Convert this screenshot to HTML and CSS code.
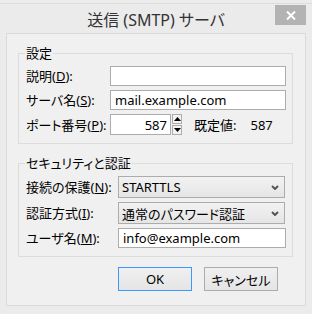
FILE: index.html
```html
<!DOCTYPE html>
<html lang="ja">
<head>
    <meta charset="UTF-8">
    <title>送信 (SMTP) サーバ</title>
    <link rel="stylesheet" href="styles.css">
</head>
<body>
<div class="window">
    <div class="titlebar">
        <div class="title">送信 (SMTP) サーバ</div>
        <a class="closebtn" href="javascript:void(0)">
            <svg width="10" height="9" viewBox="0 0 10 9"><path d="M1 0.5 L9 8.5 M9 0.5 L1 8.5" stroke="#fff" stroke-width="2" fill="none"/></svg>
        </a>
    </div>
    <div class="client">
        <fieldset class="group">
            <legend>設定</legend>
            <div class="rows rows1">
                <label class="lbl">説明(<u>D</u>):</label>
                <input class="text" type="text" value="">
                <label class="lbl">サーバ名(<u>S</u>):</label>
                <input class="text" type="text" value="mail.example.com">
                <label class="lbl">ポート番号(<u>P</u>):</label>
                <div class="portrow">
                    <input class="text port" type="text" value="587">
                    <div class="spin">
                        <span class="spinbtn"><svg width="7" height="4" viewBox="0 0 7 4"><path d="M0 4 L3.5 0 L7 4 Z" fill="#000"/></svg></span>
                        <span class="spinbtn"><svg width="7" height="4" viewBox="0 0 7 4"><path d="M0 0 L3.5 4 L7 0 Z" fill="#000"/></svg></span>
                    </div>
                    <span class="deflbl">既定値:</span>
                    <span class="defval">587</span>
                </div>
            </div>
        </fieldset>
        <fieldset class="group group2">
            <legend>セキュリティと認証</legend>
            <div class="rows rows2">
                <label class="lbl">接続の保護(<u>N</u>):</label>
                <div class="select">
                    <span>STARTTLS</span>
                    <svg width="8" height="5" viewBox="0 0 8 5"><path d="M1 1 L4 4 L7 1" stroke="#555" stroke-width="2" fill="none"/></svg>
                </div>
                <label class="lbl">認証方式(<u>I</u>):</label>
                <div class="select">
                    <span>通常のパスワード認証</span>
                    <svg width="8" height="5" viewBox="0 0 8 5"><path d="M1 1 L4 4 L7 1" stroke="#555" stroke-width="2" fill="none"/></svg>
                </div>
                <label class="lbl">ユーザ名(<u>M</u>):</label>
                <input class="text" type="text" value="info@example.com">
            </div>
        </fieldset>
        <div class="buttons">
            <a class="btn default" href="javascript:void(0)">OK</a>
            <a class="btn" href="javascript:void(0)">キャンセル</a>
        </div>
    </div>
</div>
</body>
</html>
```

FILE: styles.css
```css
body{
    margin:0;
    background-color:#ececec;
    font-family:"Noto Sans","Noto Sans CJK JP",sans-serif;
    font-size:13px;
    font-feature-settings:"palt";
    color:#000;
}
.window{
    width:312px;
    height:311px;
    margin-top:3px;
    border-top:1px solid #dcdcdc;
    box-sizing:border-box;
    background-color:#ebebeb;
}
.titlebar{
    display:grid;
    grid-template-columns:1fr auto 1fr;
    height:29px;
}
.title{
    grid-column:2;
    font-size:16px;
    line-height:29px;
    padding-top:2px;
    color:#333;
    white-space:nowrap;
}
.closebtn{
    grid-column:3;
    justify-self:end;
    align-self:start;
    width:31px;
    height:20px;
    margin-top:1px;
    margin-right:6px;
    background-color:#b3b3b3;
    display:flex;
    align-items:center;
    justify-content:center;
}
.client{
    margin:0 6px;
    height:273px;
    box-sizing:border-box;
    border:1px solid #dadada;
    background-color:#f0f0f0;
    padding:12px 12px 0 11px;
}
.group{
    margin:0;
    padding:6px 6px 8px 7px;
    border:1px solid #dcdcdc;
}
.group legend{
    padding:0 1px;
    margin-left:-1px;
    line-height:14px;
    font-size:13px;
}
.group2{
    margin-top:12px;
}
.rows{
    display:grid;
    align-items:center;
    row-gap:4px;
}
.rows1{
    grid-template-columns:84px 1fr;
}
.rows2{
    grid-template-columns:92px 1fr;
}
.lbl{
    white-space:nowrap;
    line-height:16px;
}
.text{
    height:20px;
    box-sizing:border-box;
    border:1px solid #acacac;
    background-color:#fff;
    padding:0 4px;
    margin:0;
    font-family:inherit;
    font-size:13px;
    color:#000;
    outline:none;
    width:100%;
}
.portrow{
    display:flex;
    align-items:center;
}
.port{
    width:61px;
    height:21px;
    text-align:right;
    padding-right:3px;
}
.spin{
    display:flex;
    flex-direction:column;
    margin-left:1px;
}
.spinbtn{
    width:10px;
    height:10px;
    box-sizing:border-box;
    border:1px solid #acacac;
    background-color:#f3f3f3;
    display:flex;
    align-items:center;
    justify-content:center;
}
.spinbtn + .spinbtn{
    margin-top:1px;
}
.deflbl{
    margin-left:12px;
}
.defval{
    margin-left:14px;
}
.select{
    height:22px;
    box-sizing:border-box;
    border:1px solid #acacac;
    background:linear-gradient(#f2f2f2,#e5e5e5);
    display:flex;
    align-items:center;
    justify-content:space-between;
    padding:0 5px 0 3px;
    margin-right:1px;
}
.buttons{
    display:flex;
    justify-content:flex-end;
    gap:12px;
    margin-top:10px;
    padding-right:15px;
}
.btn{
    width:74px;
    height:24px;
    box-sizing:border-box;
    border:1px solid #acacac;
    background:linear-gradient(#f0f0f0,#e5e5e5);
    display:flex;
    align-items:center;
    justify-content:center;
    text-decoration:none;
    color:#000;
}
.btn.default{
    border-color:#3c9aff;
}
```
